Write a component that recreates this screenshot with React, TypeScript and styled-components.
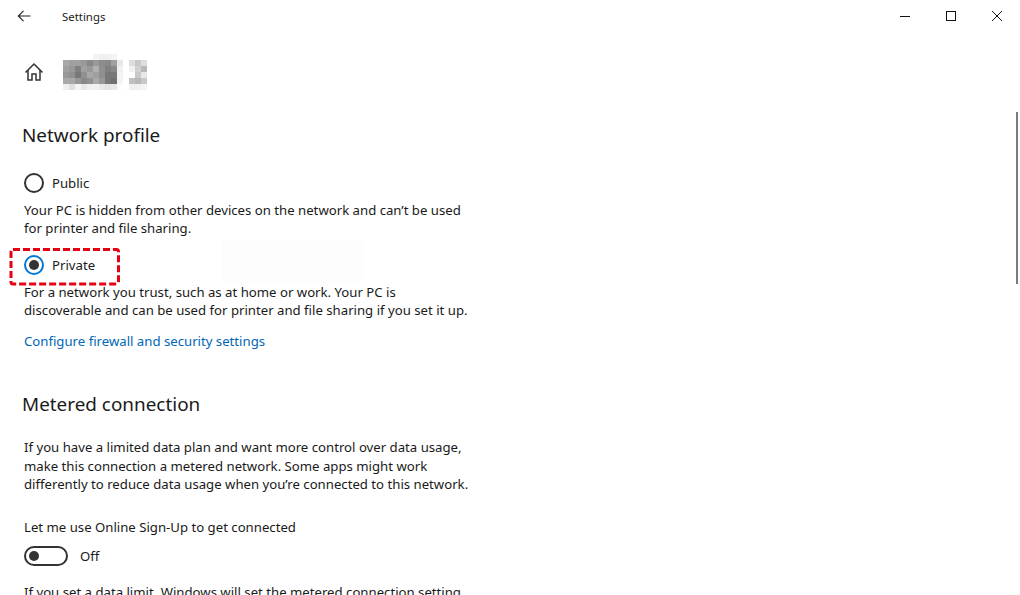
import React from "react";
import styled, { createGlobalStyle } from "styled-components";

const GlobalStyle = createGlobalStyle`
  html, body {
    margin: 0;
    padding: 0;
    background: #fff;
    overflow: hidden;
  }
`;

const Window = styled.div`
  position: relative;
  width: 1020px;
  height: 595px;
  overflow: hidden;
  font-family: "Noto Sans", "Open Sans", sans-serif;
  font-size: 13.18px;
  color: #1a1a1a;
`;

const TitleBar = styled.header`
  display: flex;
  align-items: center;
  height: 32px;
`;

const BackButton = styled.button`
  width: 48px;
  height: 32px;
  display: flex;
  align-items: center;
  justify-content: center;
  padding: 0;
  border: 0;
  background: none;
`;

const AppTitle = styled.span`
  margin-left: 14px;
  font-size: 11.4px;
`;

const WindowControls = styled.div`
  margin-left: auto;
  display: flex;
`;

const ControlButton = styled.button`
  width: 46px;
  height: 32px;
  display: flex;
  align-items: center;
  justify-content: center;
  padding: 0;
  border: 0;
  background: none;
`;

const Content = styled.main`
  padding-left: 24px;
  width: 480px;
`;

const PageHeader = styled.div`
  display: flex;
  align-items: center;
  height: 36px;
  margin-top: 22px;
`;

const Mosaic = styled.svg`
  margin-left: 19px;
  display: block;
`;

const SectionTitle = styled.h2<{ $top: number }>`
  margin: ${(p) => p.$top}px 0 0 -2px;
  font-size: 18.9px;
  font-weight: 400;
  line-height: 28px;
`;

const RadioRow = styled.div<{ $top: number }>`
  display: flex;
  align-items: center;
  gap: 8px;
  height: 20px;
  margin-top: ${(p) => p.$top}px;
`;

const RadioCircle = styled.span<{ $on?: boolean }>`
  position: relative;
  box-sizing: border-box;
  width: 20px;
  height: 20px;
  border-radius: 50%;
  border: 2px solid ${(p) => (p.$on ? "#0078d7" : "#333")};
  &::after {
    content: "";
    display: ${(p) => (p.$on ? "block" : "none")};
    position: absolute;
    left: 3px;
    top: 3px;
    width: 10px;
    height: 10px;
    border-radius: 50%;
    background: #333;
  }
`;

const Paragraph = styled.p<{ $top: number }>`
  margin: ${(p) => p.$top}px 0 0;
  line-height: 18.4px;
  white-space: nowrap;
`;

const Link = styled.a`
  display: block;
  margin-top: 11px;
  line-height: 20px;
  color: #0067b8;
`;

const ToggleRow = styled.div`
  display: flex;
  align-items: center;
  gap: 12px;
  margin-top: 10px;
  height: 20px;
`;

const ToggleTrack = styled.span`
  box-sizing: border-box;
  display: flex;
  align-items: center;
  width: 44px;
  height: 20px;
  padding-left: 3px;
  border: 2px solid #333;
  border-radius: 10px;
  &::before {
    content: "";
    width: 10px;
    height: 10px;
    border-radius: 50%;
    background: #333;
  }
`;

const ScrollThumb = styled.div`
  position: absolute;
  right: 2px;
  top: 112px;
  width: 2px;
  height: 172px;
  background: #7a7a7a;
`;

const Highlight = styled.svg`
  position: absolute;
  left: 9px;
  top: 247px;
`;

const Smudge = styled.div`
  position: absolute;
  left: 222px;
  top: 240px;
  width: 141px;
  height: 42px;
  background: #fdfdfd;
`;

// 6px blocks, one row per line, -- for an empty block
const mosaicRows = [
  "-- -- -- -- -- f4 f0 f0 f4 -- -- -- -- --",
  "a8 a0 a0 98 88 98 8c 88 a0 e8 -- dd c8 dd",
  "a0 98 80 a0 98 b0 90 80 88 f0 -- f0 d0 b8",
  "98 90 78 90 a8 a0 90 78 78 f4 -- ff c8 e8",
  "a8 a8 98 88 90 a8 98 78 70 f4 -- c0 b8 c8",
  "f0 e0 f4 e8 f0 f0 e8 e4 e8 fc -- f0 f0 f4",
];

function BackIcon() {
  return (
    <svg width="16" height="16" viewBox="0 0 16 16" fill="none" stroke="#222" strokeWidth="1.1">
      <path d="M2.5 8H14.5M7.5 2.8 2.3 8l5.2 5.2" />
    </svg>
  );
}

function HomeIcon() {
  return (
    <svg width="20" height="20" viewBox="0 0 20 20" fill="none" stroke="#333" strokeWidth="1.5">
      <path d="M1.5 10.5 10 2l8.5 8.5" />
      <path d="M4 8v10h4v-6h4v6h4V8" />
    </svg>
  );
}

function NameMosaic() {
  const rects: React.ReactElement[] = [];
  mosaicRows.forEach((row, y) => {
    row.split(" ").forEach((hex, x) => {
      if (hex === "--") return;
      rects.push(<rect key={`${x}-${y}`} x={x * 6} y={y * 6} width="6" height="6" fill={`#${hex}${hex}${hex}`} />);
    });
  });
  return (
    <Mosaic width="84" height="36" viewBox="0 0 84 36">
      {rects}
    </Mosaic>
  );
}

export default function App() {
  return (
    <Window>
      <GlobalStyle />
      <TitleBar>
        <BackButton>
          <BackIcon />
        </BackButton>
        <AppTitle>Settings</AppTitle>
        <WindowControls>
          <ControlButton>
            <svg width="10" height="10" viewBox="0 0 10 10" stroke="#111" shapeRendering="crispEdges">
              <path d="M0 5.5H10" />
            </svg>
          </ControlButton>
          <ControlButton>
            <svg width="10" height="10" viewBox="0 0 10 10" fill="none" stroke="#111" shapeRendering="crispEdges">
              <rect x="0.5" y="0.5" width="9" height="9" />
            </svg>
          </ControlButton>
          <ControlButton>
            <svg width="10" height="10" viewBox="0 0 10 10" stroke="#111" strokeWidth="1">
              <path d="M0 0 10 10M10 0 0 10" />
            </svg>
          </ControlButton>
        </WindowControls>
      </TitleBar>
      <Content>
        <PageHeader>
          <HomeIcon />
          <NameMosaic />
        </PageHeader>
        <SectionTitle $top={31}>Network profile</SectionTitle>
        <RadioRow $top={24}>
          <RadioCircle />
          Public
        </RadioRow>
        <Paragraph $top={8}>
          Your PC is hidden from other devices on the network and can’t be used
          <br />
          for printer and file sharing.
        </Paragraph>
        <RadioRow $top={17}>
          <RadioCircle $on />
          Private
        </RadioRow>
        <Paragraph $top={8}>
          For a network you trust, such as at home or work. Your PC is
          <br />
          discoverable and can be used for printer and file sharing if you set it up.
        </Paragraph>
        <Link>Configure firewall and security settings</Link>
        <SectionTitle $top={39}>Metered connection</SectionTitle>
        <Paragraph $top={20.6}>
          If you have a limited data plan and want more control over data usage,
          <br />
          make this connection a metered network. Some apps might work
          <br />
          differently to reduce data usage when you’re connected to this network.
        </Paragraph>
        <Paragraph $top={24.4}>Let me use Online Sign-Up to get connected</Paragraph>
        <ToggleRow>
          <ToggleTrack />
          Off
        </ToggleRow>
        <Paragraph $top={17}>If you set a data limit, Windows will set the metered connection setting</Paragraph>
      </Content>
      <Smudge />
      <Highlight width="112" height="39" viewBox="0 0 112 39" fill="none">
        <rect x="2" y="2.5" width="107.5" height="34.5" rx="2" stroke="#e60012" strokeWidth="3" strokeDasharray="7 3" />
      </Highlight>
      <ScrollThumb />
    </Window>
  );
}
